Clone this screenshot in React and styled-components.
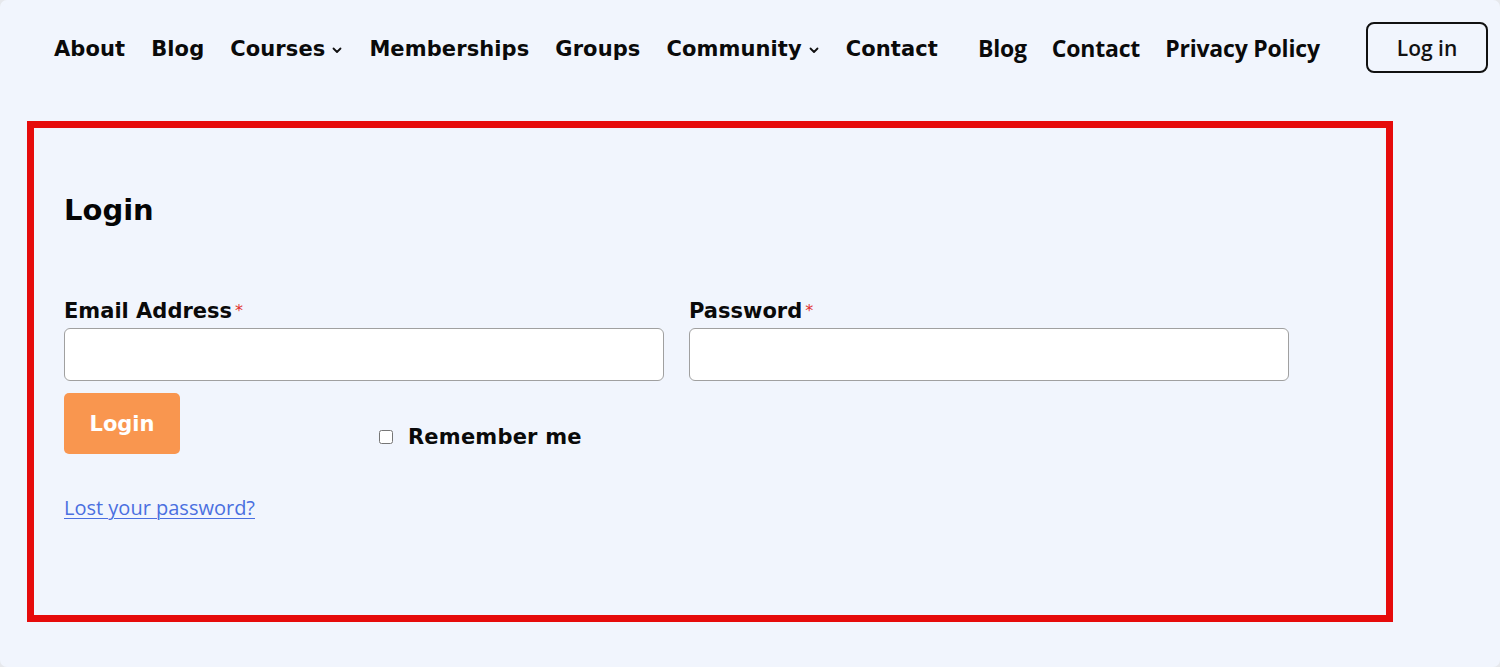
import React from 'react'
import styled, { createGlobalStyle } from 'styled-components'

const GlobalStyle = createGlobalStyle`
  html, body {
    margin: 0;
    padding: 0;
    background: #e6e8ec;
  }
  * { box-sizing: border-box; }
`;

// Marco de la pagina
const Page = styled.div`
  width: 1500px;
  height: 667px;
  background: #f1f5fd;
  border-radius: 7px;
  overflow: hidden;
`;

// Barra de navegacion
const Header = styled.header`
  display: flex;
  align-items: center;
  padding: 22px 12px 0 54px;
`;

const Menu = styled.nav`
  display: flex;
  align-items: center;
  gap: ${({ gap }) => gap}px;
  margin-left: ${({ offset }) => offset || 0}px;
`;

const MenuLink = styled.a`
  display: flex;
  align-items: center;
  height: 51px;
  padding-top: ${({ alt }) => (alt ? '0' : '2px')};
  color: #0a0a0a;
  text-decoration: none;
  font-family: ${({ alt }) => (alt ? '"Open Sans", sans-serif' : '"DejaVu Sans", sans-serif')};
  font-weight: 700;
  font-size: ${({ alt }) => (alt ? '23px' : '21px')};
  letter-spacing: ${({ alt }) => (alt ? '-0.2px' : '0.1px')};
  cursor: pointer;
`;

const Chevron = styled.svg`
  width: 12px;
  height: 12px;
  margin-left: 6px;
  margin-top: 2px;
`;

const LoginButton = styled.button`
  margin-left: auto;
  width: 122px;
  height: 51px;
  border: 2px solid #111;
  border-radius: 8px;
  background: transparent;
  color: #111;
  font-family: "Open Sans", sans-serif;
  font-weight: 600;
  font-size: 21px;
  cursor: pointer;
`;

// Caja del formulario
const Box = styled.section`
  margin: 48px 0 0 27px;
  width: 1366px;
  height: 501px;
  border: 7px solid #e60b0b;
  padding: 65px 30px 0;
`;

const Title = styled.h2`
  margin: 0;
  font-family: "DejaVu Sans", sans-serif;
  font-weight: 700;
  font-size: 29px;
  line-height: 35px;
  color: #050505;
`;

const Fields = styled.div`
  display: flex;
  gap: 25px;
  margin-top: 70px;
`;

const Field = styled.div`
  display: flex;
  flex-direction: column;
  width: 600px;
`;

const Label = styled.label`
  font-family: "DejaVu Sans", sans-serif;
  font-weight: 700;
  font-size: 21px;
  line-height: 26px;
  color: #0a0a0a;
  margin-bottom: 4px;
`;

const Required = styled.span`
  color: #e2302f;
  font-weight: 400;
  font-size: 16px;
  margin-left: 3px;
  vertical-align: top;
`;

const Input = styled.input`
  height: 53px;
  width: 100%;
  border: 1px solid #a0a0a0;
  border-radius: 6px;
  background: #fff;
  padding: 0 12px;
  font-size: 18px;
`;

const Actions = styled.div`
  display: flex;
  align-items: flex-start;
  margin-top: 12px;
`;

const Submit = styled.button`
  width: 116px;
  height: 61px;
  border: none;
  border-radius: 5px;
  background: #f9964f;
  color: #fff;
  font-family: "DejaVu Sans", sans-serif;
  font-weight: 700;
  font-size: 21px;
  cursor: pointer;
`;

const Remember = styled.label`
  display: flex;
  align-items: center;
  margin: 31px 0 0 199px;
  font-family: "DejaVu Sans", sans-serif;
  font-weight: 700;
  font-size: 21px;
  line-height: 26px;
  letter-spacing: 0.2px;
  color: #0a0a0a;
`;

const Check = styled.input`
  width: 14px;
  height: 14px;
  margin: 0 15px 0 0;
`;

const Lost = styled.a`
  display: inline-block;
  margin-top: 40px;
  font-family: "Open Sans", sans-serif;
  font-size: 20px;
  line-height: 28px;
  color: #4a6fe0;
  text-decoration: underline;
  text-underline-offset: 3px;
  text-decoration-thickness: 1px;
`;

const primary = [
  { title: 'About' },
  { title: 'Blog' },
  { title: 'Courses', sub: true },
  { title: 'Memberships' },
  { title: 'Groups' },
  { title: 'Community', sub: true },
  { title: 'Contact' },
];

const secondary = ['Blog', 'Contact', 'Privacy Policy'];

const App = () => {
  return (
    <>
      <GlobalStyle />
      <Page>
        <Header>
          <Menu gap={26}>
            {primary.map((item, index) => (
              <MenuLink key={index}>
                {item.title}
                {item.sub && (
                  <Chevron viewBox="0 0 12 12">
                    <path d="M2.5 4.5 L6 8 L9.5 4.5" fill="none" stroke="#111" strokeWidth="1.8" strokeLinecap="round" strokeLinejoin="round" />
                  </Chevron>
                )}
              </MenuLink>
            ))}
          </Menu>
          <Menu gap={25} offset={40}>
            {secondary.map((title, index) => (
              <MenuLink alt key={index}>{title}</MenuLink>
            ))}
          </Menu>
          <LoginButton>Log in</LoginButton>
        </Header>

        <Box>
          <Title>Login</Title>
          <Fields>
            <Field>
              <Label>Email Address<Required>*</Required></Label>
              <Input type="email" />
            </Field>
            <Field>
              <Label>Password<Required>*</Required></Label>
              <Input type="password" />
            </Field>
          </Fields>
          <Actions>
            <Submit>Login</Submit>
            <Remember>
              <Check type="checkbox" />
              Remember me
            </Remember>
          </Actions>
          <Lost href="#">Lost your password?</Lost>
        </Box>
      </Page>
    </>
  );
};

export default App
